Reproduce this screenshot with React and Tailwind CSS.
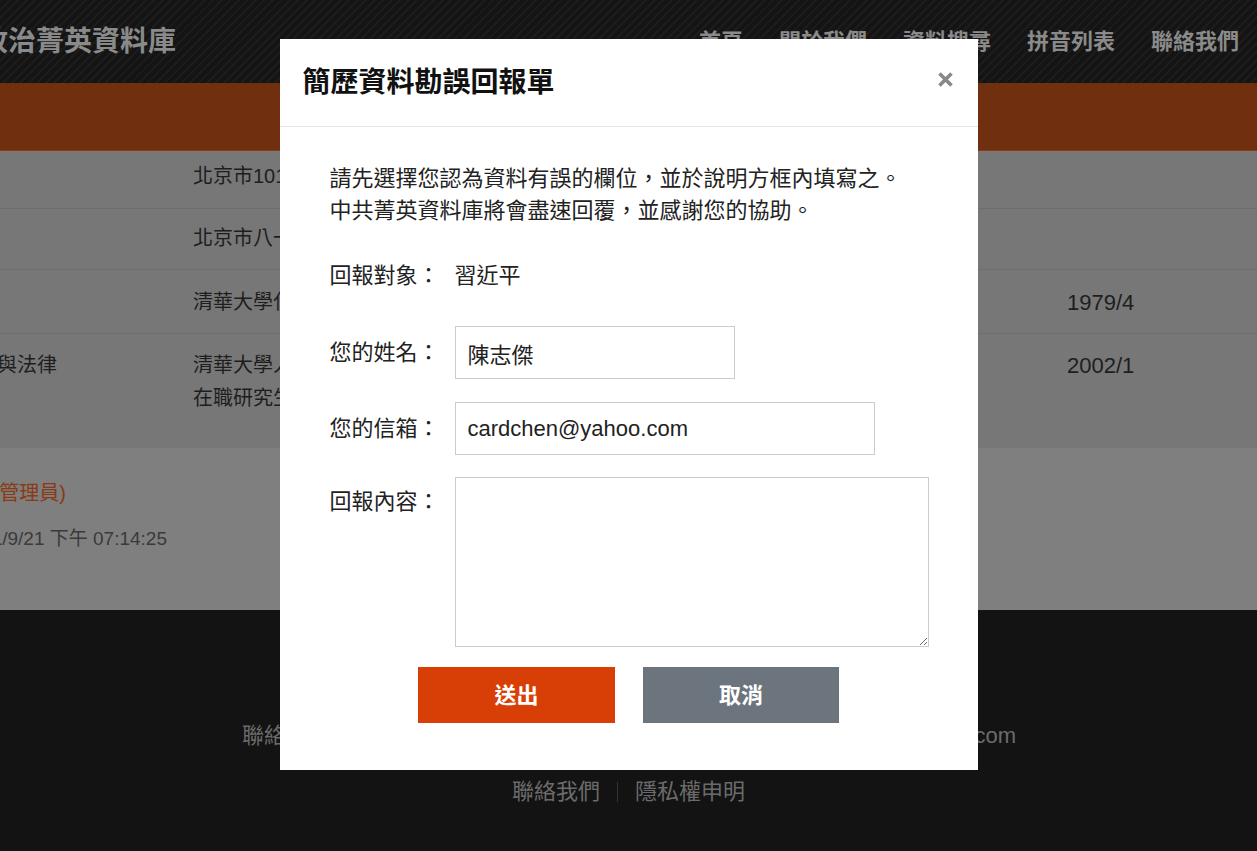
import React from "react";

const navItems = ["首頁", "關於我們", "資料搜尋", "拼音列表", "聯絡我們"];

const rows = [
    { h: "h-[57px]", pt: "pt-[9px]", a: "", b: ["北京市101中學"], c: "" },
    { h: "h-[61px]", pt: "pt-[13px]", a: "", b: ["北京市八一學校"], c: "" },
    { h: "h-[64px]", pt: "pt-[16px]", a: "", b: ["清華大學化工系"], c: "1979/4" },
    { h: "h-[115px]", pt: "pt-[15px]", a: "政治與法律", b: ["清華大學人文社會學院", "在職研究生"], c: "2002/1" },
];

export default function App() {
    return (
        <div className="relative w-[1257px] h-[851px] overflow-hidden bg-[#131313] font-['Liberation_Sans','Noto_Sans_CJK_TC',sans-serif]">
            {/* page behind the modal (already dimmed) */}
            <header className="h-[83px] flex items-center justify-between bg-[repeating-linear-gradient(135deg,#1c1c1c_0px,#1c1c1c_2px,#141414_2px,#141414_6px)]">
                <h1 className="ml-[-20px] text-[28px] leading-[36px] font-bold text-[#8a8a8a] whitespace-nowrap">政治菁英資料庫</h1>
                <nav className="flex text-[22px] leading-[30px] font-bold text-[#8a8a8a]">
                    {navItems.map((n) => (
                        <a key={n} className="px-[18px] whitespace-nowrap">{n}</a>
                    ))}
                </nav>
            </header>
            <div className="h-[67px] bg-[#70300f]" />

            {/* table */}
            <div className="bg-[#777777] border-t border-[#8a3a12] text-[20px] leading-[33px] text-[#1e1e1e]">
                {rows.map((r, i) => (
                    <div key={i} className={`flex ${r.h} ${r.pt} ${i > 0 ? "border-t border-[#6e6e6e]" : ""}`}>
                        <div className="w-[193px] shrink-0">
                            <div className="w-[57px] flex justify-end whitespace-nowrap">{r.a}</div>
                        </div>
                        <div className="flex-1 whitespace-nowrap">
                            {r.b.map((t) => (
                                <div key={t}>{t}</div>
                            ))}
                        </div>
                        <div className="w-[190px] shrink-0 whitespace-nowrap text-[22px]">{r.c}</div>
                    </div>
                ))}
            </div>

            {/* meta */}
            <div className="h-[162px] bg-[#7f7f7f] pt-[30px]">
                <div className="w-[66px] flex justify-end whitespace-nowrap text-[20px] leading-[30px] text-[#8a3a14]">更新者：(系統管理員)</div>
                <div className="mt-[16px] w-[167px] flex justify-end whitespace-nowrap text-[19px] leading-[30px] text-[#3a3a3a]">最後更新：2021/9/21 下午 07:14:25</div>
            </div>

            {/* footer */}
            <footer className="pt-[111px] text-[22px] leading-[30px] text-[#6b6b6b]">
                <div className="ml-[242px] w-[774px] flex justify-between whitespace-nowrap">
                    <span>聯絡電話：(02) 2939-3091</span>
                    <span>Email：ccpelite@nccu.edu.com</span>
                </div>
                <div className="mt-[26px] flex justify-center items-center">
                    <a>聯絡我們</a>
                    <span className="mx-[17px] w-px h-[20px] bg-[#333333]" />
                    <a>隱私權申明</a>
                </div>
            </footer>

            {/* modal */}
            <div className="absolute inset-0 flex justify-center pt-[39px]">
                <div className="w-[698px] h-[731px] bg-white">
                    <div className="h-[88px] flex items-center justify-between pl-[23px] pr-[24px] border-b border-[#e2e2e8]">
                        <h2 className="text-[28px] leading-[36px] font-bold text-[#111]">簡歷資料勘誤回報單</h2>
                        <svg width="17" height="17" viewBox="0 0 17 17" className="mt-[-6px]">
                            <path d="M2.5 2.5 L14.5 14.5 M14.5 2.5 L2.5 14.5" stroke="#888888" strokeWidth="3.6" />
                        </svg>
                    </div>

                    <div className="pl-[50px] pt-[36px] text-[22px] leading-[32px] text-[#222]">
                        <p>請先選擇您認為資料有誤的欄位，並於說明方框內填寫之。</p>
                        <p>中共菁英資料庫將會盡速回覆，並感謝您的協助。</p>

                        <div className="mt-[33px] flex">
                            <span className="w-[125px] shrink-0">回報對象：</span>
                            <span>習近平</span>
                        </div>

                        <div className="mt-[34px] flex items-center">
                            <label className="w-[125px] shrink-0">您的姓名：</label>
                            <input
                                defaultValue="陳志傑"
                                className="w-[280px] h-[53px] border border-[#cccccc] px-[12px] text-[22px] text-[#222] outline-none"
                            />
                        </div>

                        <div className="mt-[23px] flex items-center">
                            <label className="w-[125px] shrink-0">您的信箱：</label>
                            <input
                                defaultValue="cardchen@yahoo.com"
                                className="w-[420px] h-[53px] border border-[#cccccc] px-[12px] text-[22px] text-[#222] outline-none"
                            />
                        </div>

                        <div className="mt-[22px] flex items-start">
                            <label className="w-[125px] shrink-0 pt-[9px]">回報內容：</label>
                            <textarea className="w-[474px] h-[170px] border border-[#cccccc] px-[12px] py-[8px] outline-none" />
                        </div>
                    </div>

                    <div className="mt-[20px] flex justify-center gap-[28px]">
                        <button className="w-[197px] h-[56px] bg-[#d83f06] text-white text-[22px] font-bold">送出</button>
                        <button className="w-[196px] h-[56px] bg-[#6c757d] text-white text-[22px] font-bold">取消</button>
                    </div>
                </div>
            </div>
        </div>
    );
}
